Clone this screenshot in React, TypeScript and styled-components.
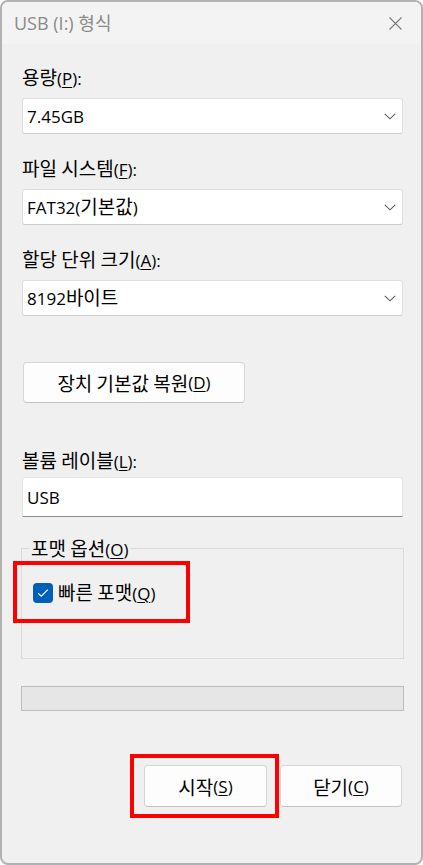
import React from "react";
import styled, { createGlobalStyle } from "styled-components";

const GlobalStyle = createGlobalStyle`
  html, body { margin: 0; padding: 0; background: #ffffff; }
  * { box-sizing: border-box; }
  body { font-family: "Open Sans", "Noto Sans CJK KR", sans-serif; color: #000; }
`;

const Window = styled.div`
  position: relative;
  width: 423px;
  height: 865px;
  border: 2px solid #b2b2b2;
  border-radius: 8px;
  background: #f0f0f0;
  overflow: hidden;
  display: flex;
  flex-direction: column;
`;

const TitleBar = styled.div`
  height: 42px;
  flex: none;
  background: #f3f3f3;
  display: flex;
  align-items: center;
  justify-content: space-between;
  padding: 0 19px 0 12px;
`;

const Title = styled.div`
  font-size: 18px;
  color: #8a8a8a;
  line-height: 22px;
`;

const Body = styled.div`
  display: flex;
  flex-direction: column;
  padding: 0 18px 0 20px;
`;

const Ko = styled.span`
  font-family: "Noto Sans CJK KR", sans-serif;
  font-size: 19px;
  line-height: 1;
`;

const Label = styled.div<{ $mt: number }>`
  margin-top: ${(p) => p.$mt}px;
  font-size: 17px;
  line-height: 20px;
  height: 20px;
  white-space: nowrap;
`;

const U = styled.span`
  text-decoration: underline;
  text-underline-offset: 2px;
  text-decoration-thickness: 1px;
`;

const Select = styled.div<{ $mt: number }>`
  margin-top: ${(p) => p.$mt}px;
  height: 36px;
  background: #ffffff;
  border: 1px solid #dedede;
  border-bottom-color: #cccccc;
  border-radius: 3px;
  display: flex;
  align-items: center;
  justify-content: space-between;
  padding: 0 6px 0 4px;
  font-size: 17px;
`;

const PushButton = styled.div<{ $w: number; $h: number }>`
  width: ${(p) => p.$w}px;
  height: ${(p) => p.$h}px;
  background: #fdfdfd;
  border: 1px solid #d6d6d6;
  border-bottom-color: #c4c4c4;
  border-radius: 4px;
  display: flex;
  align-items: center;
  justify-content: center;
  font-size: 17px;
  white-space: nowrap;
`;

const RestoreWrap = styled.div`
  margin-top: 46px;
  margin-left: 1px;
`;

const TextInput = styled.div`
  margin-top: 7px;
  height: 40px;
  background: #ffffff;
  border: 1px solid #e4e4e4;
  border-bottom: 1px solid #8c8c8c;
  border-radius: 3px 3px 0 0;
  display: flex;
  align-items: center;
  padding: 0 4px;
  font-size: 17px;
`;

const GroupBox = styled.div`
  margin: 31px -1px 0 -1px;
  height: 111px;
  border: 1px solid #dadada;
  display: flex;
  flex-direction: column;
  align-items: flex-start;
  padding-left: 11px;
`;

const GroupTitle = styled.div`
  margin-top: -11px;
  margin-left: -4px;
  padding: 0 2px;
  background: #f0f0f0;
  font-size: 17px;
  line-height: 20px;
`;

const CheckRow = styled.div`
  margin-top: 22px;
  display: flex;
  align-items: center;
  gap: 5px;
  font-size: 17px;
  line-height: 20px;
`;

const CheckBox = styled.div`
  width: 20px;
  height: 20px;
  border-radius: 4px;
  background: #005fb8;
  display: flex;
  align-items: center;
  justify-content: center;
`;

const Progress = styled.div`
  margin: 27px -1px 0 -1px;
  height: 25px;
  background: #e6e6e6;
  border: 1px solid #bcbcbc;
`;

const ButtonRow = styled.div`
  margin-top: 54px;
  margin-right: 1px;
  display: flex;
  justify-content: flex-end;
  gap: 13px;
`;

const Highlight = styled.div<{ $x: number; $y: number; $w: number; $h: number }>`
  position: absolute;
  left: ${(p) => p.$x - 2}px;
  top: ${(p) => p.$y - 2}px;
  width: ${(p) => p.$w}px;
  height: ${(p) => p.$h}px;
  border: 4px solid #ff0000;
  pointer-events: none;
`;

const Chevron = () => (
  <svg width="12" height="7" viewBox="0 0 12 7">
    <path d="M0.8 0.8 L6 5.8 L11.2 0.8" fill="none" stroke="#5a5a5a" strokeWidth="1.1" />
  </svg>
);

const CloseIcon = () => (
  <svg width="13" height="13" viewBox="0 0 13 13">
    <path d="M0.5 0.5 L12.5 12.5 M12.5 0.5 L0.5 12.5" stroke="#7a7a7a" strokeWidth="1.1" fill="none" />
  </svg>
);

const Check = () => (
  <svg width="12" height="10" viewBox="0 0 12 10">
    <path d="M1.2 5.2 L4.3 8.2 L10.8 1.6" fill="none" stroke="#ffffff" strokeWidth="1.2" />
  </svg>
);

export default function App() {
  return (
    <>
      <GlobalStyle />
      <Window>
        <TitleBar>
          <Title>USB (I:) 형식</Title>
          <CloseIcon />
        </TitleBar>
        <Body>
          <Label $mt={23}>
            <Ko>용량</Ko>(<U>P</U>):
          </Label>
          <Select $mt={11}>
            <span>7.45GB</span>
            <Chevron />
          </Select>
          <Label $mt={24}>
            <Ko>파일 시스템</Ko>(<U>F</U>):
          </Label>
          <Select $mt={11}>
            <span>
              FAT32(<Ko>기본값</Ko>)
            </span>
            <Chevron />
          </Select>
          <Label $mt={24}>
            <Ko>할당 단위 크기</Ko>(<U>A</U>):
          </Label>
          <Select $mt={11}>
            <span>
              8192<Ko>바이트</Ko>
            </span>
            <Chevron />
          </Select>
          <RestoreWrap>
            <PushButton $w={222} $h={41}>
              <Ko>장치 기본값 복원</Ko>(<U>D</U>)
            </PushButton>
          </RestoreWrap>
          <Label $mt={47}>
            <Ko>볼륨 레이블</Ko>(<U>L</U>):
          </Label>
          <TextInput>USB</TextInput>
          <GroupBox>
            <GroupTitle>
              <Ko>포맷 옵션</Ko>(<U>O</U>)
            </GroupTitle>
            <CheckRow>
              <CheckBox>
                <Check />
              </CheckBox>
              <span>
                <Ko>빠른 포맷</Ko>(<U>Q</U>)
              </span>
            </CheckRow>
          </GroupBox>
          <Progress />
          <ButtonRow>
            <PushButton $w={123} $h={42}>
              <Ko>시작</Ko>(<U>S</U>)
            </PushButton>
            <PushButton $w={122} $h={42}>
              <Ko>닫기</Ko>(<U>C</U>)
            </PushButton>
          </ButtonRow>
        </Body>
        <Highlight $x={13} $y={561} $w={177} $h={62} />
        <Highlight $x={130} $y={754} $w={149} $h={64} />
      </Window>
    </>
  );
}
